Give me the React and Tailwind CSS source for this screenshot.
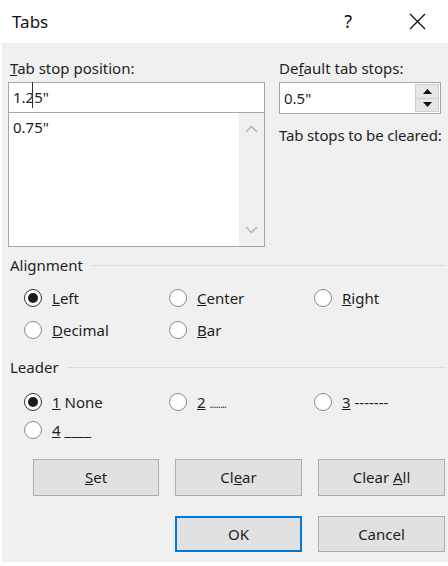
import React, { useState } from 'react';

const font = { fontFamily: '"Noto Sans", "Liberation Sans", sans-serif' };

function Radio({ checked, onSelect, children }) {
  return (
    <button type="button" onClick={onSelect} className="flex items-center gap-[10px] h-[28px] text-left">
      <span
        className={`w-[18px] h-[18px] rounded-full bg-white flex items-center justify-center border-[1.5px] ${
          checked ? 'border-[#333]' : 'border-[#8a8a8a]'
        }`}
      >
        {checked && <span className="w-[10px] h-[10px] rounded-full bg-[#1a1a1a]" />}
      </span>
      <span>{children}</span>
    </button>
  );
}

function GroupHeader({ title }) {
  return (
    <div className="flex items-center h-[20px] pl-[8px] pr-[2px]">
      <span>{title}</span>
      <span className="flex-1 h-px bg-[#dcdcdc] ml-[8px]" />
    </div>
  );
}

function DlgButton({ children, primary }) {
  return (
    <button
      type="button"
      className={`h-full bg-[#e1e1e1] ${primary ? 'border-2 border-[#0078d7]' : 'border border-[#adadad]'}`}
    >
      {children}
    </button>
  );
}

export default function App() {
  const [align, setAlign] = useState('left');
  const [leader, setLeader] = useState('1');

  return (
    <div className="w-[448px] h-[566px] bg-white flex flex-col text-[15px] text-[#1e1e1e]" style={font}>
      {/* title bar */}
      <div className="h-[43px] flex items-center pl-[12px] shrink-0">
        <span className="text-[17px] text-[#111]">Tabs</span>
        <span className="ml-auto text-[18px] text-[#111]">?</span>
        <svg width="17" height="17" viewBox="0 0 17 17" className="ml-[57px] mr-[22px]">
          <path d="M1 1L16 16M16 1L1 16" stroke="#111" strokeWidth="1.3" />
        </svg>
      </div>

      <div className="ml-[2px] w-[446px] h-[519px] bg-[#f0f0f0] flex flex-col">
        {/* positions */}
        <div className="flex pt-[15px] pl-[6px]">
          <div className="w-[257px] flex flex-col">
            <div className="h-[20px] leading-[20px] pl-[2px] mb-[4px]">
              <span className="underline">T</span>ab stop position:
            </div>
            <div className="h-[31px] bg-white border border-[#a6a6a6] flex items-center pl-[4px]">
              1.2<span className="relative">5<span className="absolute left-[-2px] top-[-4px] w-px h-[26px] bg-[#333]" /></span>"
            </div>
            <div className="h-[134px] bg-white border-x border-b border-[#a6a6a6] flex">
              <div className="flex-1 pl-[4px] pt-[4px] leading-[20px]">0.75"</div>
              <div className="w-[25px] bg-[#f0f0f0] flex flex-col items-center justify-between py-[12px]">
                <svg width="13" height="8" viewBox="0 0 13 8">
                  <path d="M1 7L6.5 1.5L12 7" fill="none" stroke="#b8b8b8" strokeWidth="1.6" />
                </svg>
                <svg width="13" height="8" viewBox="0 0 13 8">
                  <path d="M1 1L6.5 6.5L12 1" fill="none" stroke="#b8b8b8" strokeWidth="1.6" />
                </svg>
              </div>
            </div>
          </div>

          <div className="ml-[14px] w-[162px] flex flex-col">
            <div className="h-[20px] leading-[20px] mb-[4px]">
              De<span className="underline">f</span>ault tab stops:
            </div>
            <div className="h-[32px] bg-white border border-[#a6a6a6] flex">
              <div className="flex-1 flex items-center pl-[4px]">0.5"</div>
              <div className="w-[24px] my-[1px] mr-[1px] bg-[#e6e6e6] border border-[#cfcfcf] flex flex-col">
                <div className="flex-1 flex items-center justify-center border-b border-[#cfcfcf]">
                  <svg width="9" height="5" viewBox="0 0 9 5"><path d="M0 5L4.5 0L9 5Z" fill="#111" /></svg>
                </div>
                <div className="flex-1 flex items-center justify-center">
                  <svg width="9" height="5" viewBox="0 0 9 5"><path d="M0 0L4.5 5L9 0Z" fill="#111" /></svg>
                </div>
              </div>
            </div>
            <div className="h-[20px] leading-[20px] mt-[11px] whitespace-nowrap tracking-[-0.15px]">
              Tab stops to be cleared:
            </div>
          </div>
        </div>

        {/* alignment */}
        <div className="mt-[8px]">
          <GroupHeader title="Alignment" />
        </div>
        <div className="grid grid-cols-[145px_145px_145px] gap-y-[4px] pl-[22px] mt-[9px]">
          <Radio checked={align === 'left'} onSelect={() => setAlign('left')}>
            <span className="underline">L</span>eft
          </Radio>
          <Radio checked={align === 'center'} onSelect={() => setAlign('center')}>
            <span className="underline">C</span>enter
          </Radio>
          <Radio checked={align === 'right'} onSelect={() => setAlign('right')}>
            <span className="underline">R</span>ight
          </Radio>
          <Radio checked={align === 'decimal'} onSelect={() => setAlign('decimal')}>
            <span className="underline">D</span>ecimal
          </Radio>
          <Radio checked={align === 'bar'} onSelect={() => setAlign('bar')}>
            <span className="underline">B</span>ar
          </Radio>
        </div>

        {/* leader */}
        <div className="mt-[13px]">
          <GroupHeader title="Leader" />
        </div>
        <div className="grid grid-cols-[145px_145px_145px] pl-[22px] mt-[11px]">
          <Radio checked={leader === '1'} onSelect={() => setLeader('1')}>
            <span className="underline">1</span> None
          </Radio>
          <Radio checked={leader === '2'} onSelect={() => setLeader('2')}>
            <span className="underline">2</span> <span className="text-[10px] tracking-[-0.6px]">........</span>
          </Radio>
          <Radio checked={leader === '3'} onSelect={() => setLeader('3')}>
            <span className="underline">3</span> -------
          </Radio>
          <Radio checked={leader === '4'} onSelect={() => setLeader('4')}>
            <span className="underline">4</span> ____
          </Radio>
        </div>

        {/* buttons */}
        <div className="grid grid-cols-[126px_127px_127px] gap-x-[16px] h-[37px] pl-[31px] mt-[15px]">
          <DlgButton><span className="underline">S</span>et</DlgButton>
          <DlgButton>Cl<span className="underline">e</span>ar</DlgButton>
          <DlgButton>Clear <span className="underline">A</span>ll</DlgButton>
        </div>
        <div className="grid grid-cols-[126px_127px_127px] gap-x-[16px] h-[36px] pl-[31px] mt-[20px]">
          <div />
          <DlgButton primary>OK</DlgButton>
          <DlgButton>Cancel</DlgButton>
        </div>
      </div>
    </div>
  );
}
